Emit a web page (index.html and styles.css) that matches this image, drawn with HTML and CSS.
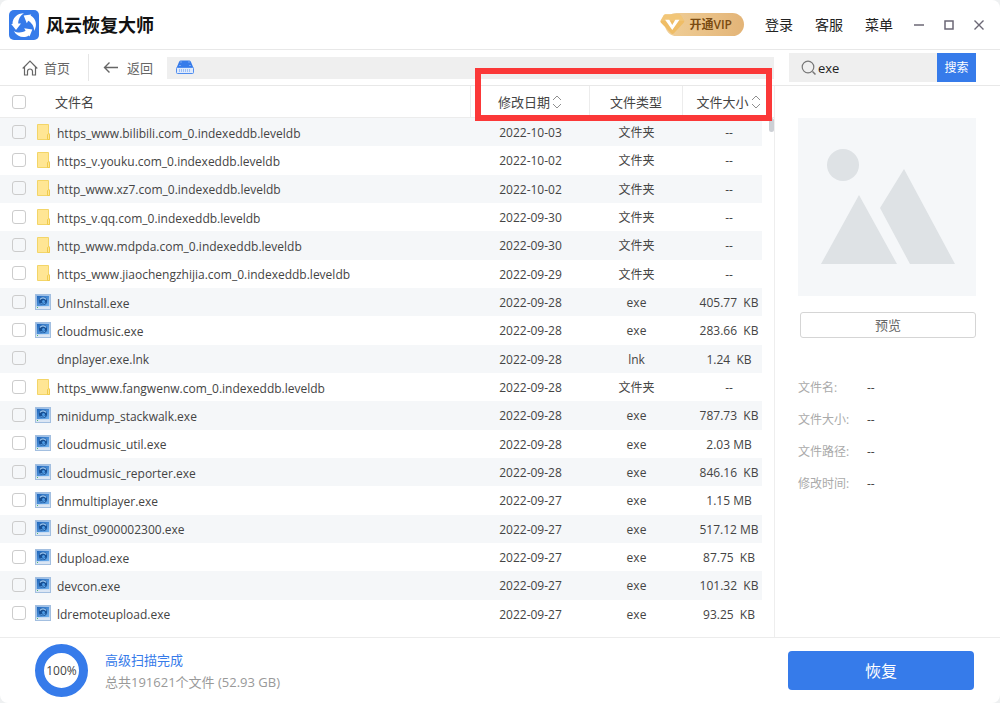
FILE: index.html
```html
<!DOCTYPE html>
<html lang="zh-CN">
<head>
<meta charset="utf-8">
<title>风云恢复大师</title>
<link rel="stylesheet" href="styles.css">
</head>
<body>
<svg class="sprite" aria-hidden="true">
  <defs>
    <linearGradient id="exe-bg" x1="0" y1="0" x2="1" y2="1"><stop offset="0" stop-color="#8fb6e4"/><stop offset="1" stop-color="#c3daf3"/></linearGradient>
    <linearGradient id="exe-in" x1="0" y1="0" x2="1" y2="1"><stop offset="0" stop-color="#1f66bb"/><stop offset="1" stop-color="#6fb0ee"/></linearGradient>
    <path id="turn" d="M15 3.200C8 3.200 3.500 8 3.500 14H2.200L7 20 12 13.500H9.200C9.200 9.500 11 5.500 15 3.200z"/>
  </defs>
  <symbol id="folder" viewBox="0 0 16 16">
    <path d="M2.500.500h11v9l1 .500v5.500h-12z" fill="#ffe694" stroke="#f3d568"/>
    <path d="M12.500 15.500v-5l1.500-1 .500 1v5z" fill="#ffe694" stroke="#f0cb4e"/>
  </symbol>
  <symbol id="exe" viewBox="0 0 16 16">
    <rect width="16" height="16" fill="#a3bfe0"/>
    <rect x="1" y="1" width="14" height="14" fill="url(#exe-bg)"/>
    <rect x="2" y="2" width="12" height="10" fill="url(#exe-in)"/>
    <circle cx="8" cy="7" r="4" fill="#174f94"/>
    <path d="M5 5.500a3.500 3.500 0 0 1 6 0" stroke="#a9d2f8" stroke-width="1.200" fill="none"/>
    <circle cx="8.500" cy="7.500" r="1.500" fill="#4d9be6"/>
    <path d="M5.500 9.500q2.500 1.500 5-.500" stroke="#5fa6ea" fill="none"/>
    <path d="M1 12.500h14V15H1z" fill="#dbe6f4"/>
    <path d="M2 13h1v1H2z" fill="#49b86a"/>
  </symbol>
  <symbol id="sort" viewBox="0 0 10 16">
    <path d="M1 6l4-4 4 4M1 10l4 4 4-4" fill="none" stroke="#8f8f8f"/>
  </symbol>
</svg>

<div class="window">
  <header class="titlebar">
    <svg class="logo" viewBox="0 0 30 30" aria-hidden="true">
      <rect width="30" height="30" rx="5" fill="#367bea"/>
      <g fill="#fff">
        <use href="#turn"/>
        <use href="#turn" transform="rotate(120 15 15)"/>
        <use href="#turn" transform="rotate(240 15 15)"/>
      </g>
    </svg>
    <h1 class="brand">风云恢复大师</h1>
    <button class="vip" type="button">
      <svg class="vip-gem" viewBox="0 0 28 24" aria-hidden="true">
        <path d="M6 1h14q1.500 0 2.500 1.200L26 8q.500 1-.500 2L15 21.500q-1.500 1.500-3 0L1 10q-1-1-.400-2L4 2q.800-1 2-1z" fill="#efbd66"/>
        <path d="M6 1h14q1.500 0 2.500 1.200L26 8H.600L4 2q.800-1 2-1z" fill="#f5d08a" opacity=".5"/>
        <path d="M5.500 7h4.500l3.200 5.500L16.500 7H21l-7.800 11z" fill="#fff"/>
      </svg>
      <span>开通VIP</span>
    </button>
    <nav class="menu">
      <a href="#login">登录</a>
      <a href="#service">客服</a>
      <a href="#menu">菜单</a>
    </nav>
    <div class="winctl">
      <button type="button" aria-label="最小化"><svg viewBox="0 0 12 12"><path d="M1 6h10" stroke="#6b6775" stroke-width="1.500"/></svg></button>
      <button type="button" aria-label="最大化"><svg viewBox="0 0 12 12"><rect x="2" y="2" width="8" height="8" fill="none" stroke="#6b6775" stroke-width="1.500"/></svg></button>
      <button type="button" aria-label="关闭"><svg viewBox="0 0 12 12"><path d="M1.500 1.500l9 9M10.500 1.500l-9 9" stroke="#6b6775" stroke-width="1.400"/></svg></button>
    </div>
  </header>

  <div class="toolbar">
    <button class="tool" type="button">
      <svg class="home" viewBox="0 0 16 16"><path d="M.700 8.500L8 1.200l7.300 7.300M2.500 7v8h3v-3.500a2.500 2.500 0 0 1 5 0V15h3V7" fill="none" stroke="#666" stroke-width="1.200"/></svg>
      <span>首页</span>
    </button>
    <button class="tool back" type="button">
      <svg class="arrow" viewBox="0 0 16 16"><path d="M15 7.500H1.500M6.500 2.500l-5 5 5 5" fill="none" stroke="#666" stroke-width="1.400"/></svg>
      <span>返回</span>
    </button>
    <div class="path">
      <svg class="disk" viewBox="0 0 18 15"><path d="M4.500.500h9Q14.500.500 15 2l2.500 6H.500L3 2Q3.500.500 4.500.500z" fill="#367bea"/><rect x=".500" y="7.500" width="17" height="6" rx="1" fill="#dfeafc" stroke="#4f8def"/><path d="M3 10.500h12" stroke="#9dc0f6" stroke-width="3" stroke-dasharray="1 1"/><path d="M4.500 2h1M12.500 2h1M3.500 5.500h1M13.500 5.500h1" stroke="#bcd4fa"/></svg>
    </div>
    <form class="search">
      <label class="search-box">
        <svg class="glass" viewBox="0 0 16 16"><circle cx="7" cy="7" r="5.800" fill="none" stroke="#777" stroke-width="1.200"/><path d="M11.500 11.500l3 3" stroke="#777" stroke-width="1.500"/></svg>
        <input type="text" value="exe" aria-label="搜索文件">
      </label>
      <button type="button">搜索</button>
    </form>
  </div>

  <main class="content">
    <section class="list">
      <table class="files">
        <thead>
          <tr>
            <th class="name"><div class="cell"><input type="checkbox" aria-label="全选"><span>文件名</span></div></th>
            <th class="date">修改日期<svg class="sort"><use href="#sort"/></svg></th>
            <th class="type">文件类型</th>
            <th class="size">文件大小<svg class="sort"><use href="#sort"/></svg></th>
          </tr>
        </thead>
        <tbody>
          <tr><td><label class="cell"><input type="checkbox"><svg class="ico"><use href="#folder"/></svg><span>https_www.bilibili.com_0.indexeddb.leveldb</span></label></td><td>2022-10-03</td><td>文件夹</td><td>--</td></tr>
          <tr><td><label class="cell"><input type="checkbox"><svg class="ico"><use href="#folder"/></svg><span>https_v.youku.com_0.indexeddb.leveldb</span></label></td><td>2022-10-02</td><td>文件夹</td><td>--</td></tr>
          <tr><td><label class="cell"><input type="checkbox"><svg class="ico"><use href="#folder"/></svg><span>http_www.xz7.com_0.indexeddb.leveldb</span></label></td><td>2022-10-02</td><td>文件夹</td><td>--</td></tr>
          <tr><td><label class="cell"><input type="checkbox"><svg class="ico"><use href="#folder"/></svg><span>https_v.qq.com_0.indexeddb.leveldb</span></label></td><td>2022-09-30</td><td>文件夹</td><td>--</td></tr>
          <tr><td><label class="cell"><input type="checkbox"><svg class="ico"><use href="#folder"/></svg><span>http_www.mdpda.com_0.indexeddb.leveldb</span></label></td><td>2022-09-30</td><td>文件夹</td><td>--</td></tr>
          <tr><td><label class="cell"><input type="checkbox"><svg class="ico"><use href="#folder"/></svg><span>https_www.jiaochengzhijia.com_0.indexeddb.leveldb</span></label></td><td>2022-09-29</td><td>文件夹</td><td>--</td></tr>
          <tr><td><label class="cell"><input type="checkbox"><svg class="ico"><use href="#exe"/></svg><span>UnInstall.exe</span></label></td><td>2022-09-28</td><td>exe</td><td>405.77&nbsp; KB</td></tr>
          <tr><td><label class="cell"><input type="checkbox"><svg class="ico"><use href="#exe"/></svg><span>cloudmusic.exe</span></label></td><td>2022-09-28</td><td>exe</td><td>283.66&nbsp; KB</td></tr>
          <tr><td><label class="cell"><input type="checkbox"><svg class="ico"></svg><span>dnplayer.exe.lnk</span></label></td><td>2022-09-28</td><td>lnk</td><td>1.24&nbsp; KB</td></tr>
          <tr><td><label class="cell"><input type="checkbox"><svg class="ico"><use href="#folder"/></svg><span>https_www.fangwenw.com_0.indexeddb.leveldb</span></label></td><td>2022-09-28</td><td>文件夹</td><td>--</td></tr>
          <tr><td><label class="cell"><input type="checkbox"><svg class="ico"><use href="#exe"/></svg><span>minidump_stackwalk.exe</span></label></td><td>2022-09-28</td><td>exe</td><td>787.73&nbsp; KB</td></tr>
          <tr><td><label class="cell"><input type="checkbox"><svg class="ico"><use href="#exe"/></svg><span>cloudmusic_util.exe</span></label></td><td>2022-09-28</td><td>exe</td><td>2.03 MB</td></tr>
          <tr><td><label class="cell"><input type="checkbox"><svg class="ico"><use href="#exe"/></svg><span>cloudmusic_reporter.exe</span></label></td><td>2022-09-28</td><td>exe</td><td>846.16&nbsp; KB</td></tr>
          <tr><td><label class="cell"><input type="checkbox"><svg class="ico"><use href="#exe"/></svg><span>dnmultiplayer.exe</span></label></td><td>2022-09-27</td><td>exe</td><td>1.15 MB</td></tr>
          <tr><td><label class="cell"><input type="checkbox"><svg class="ico"><use href="#exe"/></svg><span>ldinst_0900002300.exe</span></label></td><td>2022-09-27</td><td>exe</td><td>517.12 MB</td></tr>
          <tr><td><label class="cell"><input type="checkbox"><svg class="ico"><use href="#exe"/></svg><span>ldupload.exe</span></label></td><td>2022-09-27</td><td>exe</td><td>87.75&nbsp; KB</td></tr>
          <tr><td><label class="cell"><input type="checkbox"><svg class="ico"><use href="#exe"/></svg><span>devcon.exe</span></label></td><td>2022-09-27</td><td>exe</td><td>101.32&nbsp; KB</td></tr>
          <tr><td><label class="cell"><input type="checkbox"><svg class="ico"><use href="#exe"/></svg><span>ldremoteupload.exe</span></label></td><td>2022-09-27</td><td>exe</td><td>93.25&nbsp; KB</td></tr>
        </tbody>
      </table>
      <div class="thumb"></div>
      <div class="highlight"></div>
    </section>

    <aside class="side">
      <svg class="preview" viewBox="0 0 178 178" aria-hidden="true">
        <rect width="178" height="178" fill="#f5f7f9"/>
        <g fill="#dee2e5">
          <circle cx="45" cy="47" r="16"/>
          <path d="M61 77l38 69H23zM106 51l51 95h-45L82 90z"/>
        </g>
      </svg>
      <button class="preview-btn" type="button">预览</button>
      <dl class="meta">
        <dt>文件名:</dt><dd>--</dd>
        <dt>文件大小:</dt><dd>--</dd>
        <dt>文件路径:</dt><dd>--</dd>
        <dt>修改时间:</dt><dd>--</dd>
      </dl>
    </aside>
  </main>

  <footer class="footer">
    <div class="ring">100%</div>
    <div class="status">
      <p class="done">高级扫描完成</p>
      <p class="total">总共191621个文件 (52.93 GB)</p>
    </div>
    <button class="recover" type="button">恢复</button>
  </footer>
</div>
</body>
</html>
```

FILE: styles.css
```css
* { box-sizing: border-box; }
body {
  margin: 0;
  background: #eef0f1;
  color: #444;
  font: 13px/18px "Open Sans", "Noto Sans CJK SC", sans-serif;
}
button {
  margin: 0;
  padding: 0;
  border: 0;
  background: none;
  color: inherit;
  font: inherit;
  cursor: pointer;
}
.sprite { position: absolute; width: 0; height: 0; }
.window {
  display: flex;
  flex-direction: column;
  min-height: 100vh;
  background: #fff;
  border-radius: 8px;
}

.titlebar {
  display: flex;
  align-items: center;
  height: 50px;
  padding: 0 15px 0 9px;
  border-bottom: 1px solid #e8e8e8;
}
.logo { width: 30px; height: 30px; }
.brand {
  margin: 0 auto 0 7px;
  color: #111;
  font-size: 18px;
  line-height: 26px;
  font-weight: 700;
}
.vip {
  position: relative;
  height: 23px;
  padding: 0 12px 0 24px;
  margin-right: 21px;
  border-radius: 12px;
  background: linear-gradient(90deg, #f0cf98, #e3b477);
  color: #7a4b12;
  font-size: 12px;
  line-height: 22px;
  font-weight: 600;
}
.vip-gem { position: absolute; left: -5px; top: 0; width: 26px; height: 23px; }
.menu { display: flex; gap: 22px; margin-right: 20px; }
.menu a { color: #222; font-size: 14px; text-decoration: none; }
.winctl { display: flex; gap: 18px; }
.winctl button { width: 12px; height: 12px; }
.winctl svg { display: block; width: 12px; height: 12px; }

.toolbar {
  display: flex;
  align-items: center;
  height: 36px;
  padding-right: 24px;
  border-bottom: 1px solid #e8e8e8;
}
.tool {
  display: flex;
  align-items: center;
  gap: 6px;
  height: 27px;
  padding: 0 18px 0 22px;
  color: #666;
}
.tool svg { width: 16px; height: 16px; }
.back { gap: 8px; padding: 0 14px; border-left: 1px solid #e6e6e6; }
.path {
  display: flex;
  align-items: center;
  flex: 1;
  height: 22px;
  padding-left: 9px;
  background: #efefef;
}
.disk { width: 18px; height: 15px; }
.search { display: flex; width: 187px; height: 29px; margin-left: 15px; }
.search-box {
  display: flex;
  align-items: center;
  flex: 1;
  min-width: 0;
  padding-left: 12px;
  background: #efefef;
}
.glass { width: 16px; height: 16px; }
.search input {
  flex: 1;
  min-width: 0;
  padding: 0 1px;
  border: 0;
  outline: 0;
  background: none;
  color: #222;
  font: inherit;
}
.search button { width: 39px; background: #367bea; color: #fff; font-size: 12px; }

.content { display: flex; flex: 1; }
.list {
  position: relative;
  display: flex;
  flex: 1;
  padding-bottom: 9px;
  border-right: 1px solid #eee;
}
.files { width: 100%; border-spacing: 0; table-layout: fixed; }
.files th {
  height: 32px;
  padding: 0;
  border-right: 1px solid #ececec;
  border-bottom: 1px solid #ececec;
  font-weight: 400;
  text-align: center;
  white-space: nowrap;
}
.files th:last-child { border-right: 0; }
.date { width: 119px; }
.type { width: 93px; }
.size { width: 91px; }
.sort { width: 10px; height: 16px; margin-left: 2px; vertical-align: -3px; }
.files td {
  height: 28px;
  padding: 2px 0 0;
  font-size: 12px;
  text-align: center;
  white-space: nowrap;
}
.files td:last-child { padding-left: 13px; border-right: 12px solid #fff; }
.files tbody tr:nth-child(odd) td { background: #f5f7f9; }
.cell { display: flex; align-items: center; padding-left: 12px; }
.cell input {
  appearance: none;
  width: 14px;
  height: 14px;
  margin: 0;
  border: 1px solid #ccc;
  border-radius: 3px;
  background: #fff;
}
.files td .cell { align-items: flex-start; }
.files td .cell span { padding-top: 1px; }
.files td .cell input { margin-top: 1px; background: none; }
th .cell span { margin-left: 29px; }
.ico { width: 16px; height: 16px; margin: 0 6px 0 9px; }
.thumb {
  position: absolute;
  top: 32px;
  right: 0;
  width: 5px;
  height: 14px;
  border-radius: 3px;
  background: #cdd0d5;
}
.highlight {
  position: absolute;
  top: -18px;
  right: 2px;
  width: 297px;
  height: 53px;
  border: 6px solid #fb3838;
  pointer-events: none;
}

.side { width: 225px; padding: 32px 24px 0 23px; }
.preview { display: block; width: 100%; }
.preview-btn {
  display: block;
  width: 176px;
  height: 26px;
  margin: 16px 0 0 auto;
  border: 1px solid #d5d5d5;
  border-radius: 3px;
  color: #666;
}
.meta {
  display: grid;
  grid-template-columns: 69px 1fr;
  row-gap: 14px;
  margin: 41px 0 0;
  font-size: 12px;
}
.meta dt { color: #aaa; }
.meta dd { margin: 0; color: #444; }

.footer {
  display: flex;
  align-items: center;
  height: 66px;
  padding: 0 26px 0 35px;
  border-top: 1px solid #ececec;
}
.ring {
  display: flex;
  align-items: center;
  justify-content: center;
  width: 53px;
  height: 53px;
  border: 9px solid #367bea;
  border-radius: 50%;
  font-size: 12px;
}
.status { margin: 0 auto 0 17px; }
.status p { margin: 0; line-height: 22px; }
.done { color: #367bea; }
.total { color: #999; }
.recover {
  width: 186px;
  height: 39px;
  border-radius: 4px;
  background: #367bea;
  color: #fff;
  font-size: 16px;
}
```
